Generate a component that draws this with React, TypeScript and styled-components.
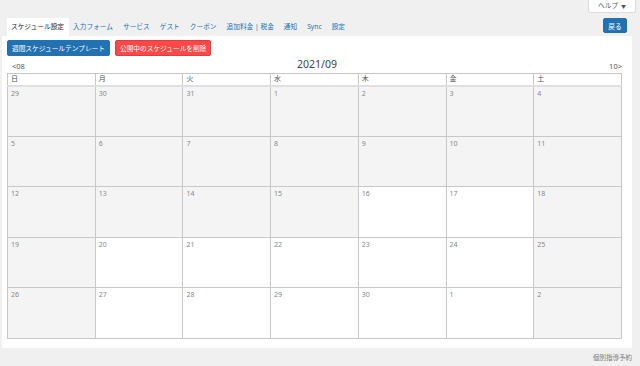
import styled, { createGlobalStyle } from 'styled-components'

const GlobalStyle = createGlobalStyle`
  html, body {
    margin: 0;
    padding: 0;
    background: #f0f0f1;
    font-family: "Noto Sans", "Noto Sans CJK JP", sans-serif;
  }
  * { box-sizing: border-box; }
`

const tabs = ['スケジュール設定', '入力フォーム', 'サービス', 'ゲスト', 'クーポン', '追加料金 | 税金', '通知', 'Sync', '設定']
const weekdays = ['日', '月', '火', '水', '木', '金', '土']

interface Day {
  label: number
  past: boolean
}

// past days are greyed, weekends are greyed too
function buildWeeks(): Day[][] {
  const start = new Date(2021, 7, 29)
  const today = new Date(2021, 8, 16)
  const weeks: Day[][] = []
  for (let w = 0; w < 5; w++) {
    const row: Day[] = []
    for (let d = 0; d < 7; d++) {
      const date = new Date(start.getFullYear(), start.getMonth(), start.getDate() + w * 7 + d)
      const weekend = d === 0 || d === 6
      row.push({ label: date.getDate(), past: weekend || date < today })
    }
    weeks.push(row)
  }
  return weeks
}

function App() {
  const weeks = buildWeeks()

  return (
    <>
      <GlobalStyle />
      <Page>
        <HelpBar>
          <HelpTab>
            ヘルプ <Caret>▼</Caret>
          </HelpTab>
        </HelpBar>
        <TabBar>
          <Tabs>
            {tabs.map((t, i) => (
              <Tab key={t} $active={i === 0}>
                {t}
              </Tab>
            ))}
          </Tabs>
          <BackButton>戻る</BackButton>
        </TabBar>
        <Panel>
          <ActionRow>
            <ActionButton $tone="blue">週間スケジュールテンプレート</ActionButton>
            <ActionButton $tone="red">公開中のスケジュールを削除</ActionButton>
          </ActionRow>
          <MonthNav>
            <NavLink>&lt;08</NavLink>
            <MonthTitle>2021/09</MonthTitle>
            <NavLink>10&gt;</NavLink>
          </MonthNav>
          <Calendar>
            <thead>
              <tr>
                {weekdays.map(w => (
                  <HeadCell key={w}>{w}</HeadCell>
                ))}
              </tr>
            </thead>
            <tbody>
              {weeks.map((row, i) => (
                <tr key={i}>
                  {row.map((day, j) => (
                    <DayCell key={j} $past={day.past}>
                      {day.label}
                    </DayCell>
                  ))}
                </tr>
              ))}
            </tbody>
          </Calendar>
        </Panel>
        <Footer>個別指導予約</Footer>
      </Page>
    </>
  )
}

const Page = styled.div`
  width: 640px;
  height: 366px;
  overflow: hidden;
`

const HelpBar = styled.div`
  display: flex;
  justify-content: flex-end;
  padding-right: 4px;
`

const HelpTab = styled.div`
  width: 48px;
  height: 13px;
  background: #fff;
  border: 1px solid #dcdcde;
  border-top: none;
  border-radius: 0 0 3px 3px;
  color: #50575e;
  font-size: 6.7px;
  line-height: 12px;
  text-align: center;
`

const Caret = styled.span`
  font-size: 5px;
  margin-left: 1px;
`

const TabBar = styled.div`
  display: flex;
  justify-content: space-between;
  align-items: flex-start;
  margin-top: 5px;
  padding: 0 13px 0 7px;
  height: 18px;
`

const Tabs = styled.div`
  display: flex;
  height: 18px;
`

const Tab = styled.div<{ $active?: boolean }>`
  padding: 0 5px 0 4px;
  margin-right: ${p => (p.$active ? '0' : '1px')};
  line-height: 18px;
  font-size: 6.7px;
  white-space: nowrap;
  color: ${p => (p.$active ? '#1d2327' : '#2271b1')};
  background: ${p => (p.$active ? '#fff' : 'transparent')};
`

const BackButton = styled.button`
  width: 24px;
  height: 15px;
  padding: 0;
  border: 1px solid #2271b1;
  border-radius: 2px;
  background: #2271b1;
  color: #fff;
  font-family: inherit;
  font-size: 6.7px;
`

const Panel = styled.div`
  margin: 0 8px 0 2px;
  height: 312px;
  background: #fff;
  padding: 4px 10px 0 5px;
`

const ActionRow = styled.div`
  display: flex;
  gap: 5px;
`

const ActionButton = styled.button<{ $tone: 'blue' | 'red' }>`
  height: 16px;
  padding: 0 4px;
  border-radius: 2px;
  font-family: inherit;
  font-size: 6.7px;
  color: #fff;
  background: ${p => (p.$tone === 'blue' ? '#2271b1' : '#ff4848')};
  border: 1px solid ${p => (p.$tone === 'blue' ? '#2271b1' : '#e33c3c')};
  white-space: nowrap;
`

const MonthNav = styled.div`
  display: flex;
  justify-content: space-between;
  align-items: flex-end;
  height: 17px;
  padding: 0 0 2px 5px;
`

const NavLink = styled.span`
  font-size: 7.5px;
  color: #555;
  line-height: 10px;
`

const MonthTitle = styled.span`
  font-size: 10.5px;
  color: #444;
  line-height: 13px;
`

const Calendar = styled.table`
  width: 615px;
  table-layout: fixed;
  border-collapse: collapse;
  border: 1px solid #c8c8c8;
`

const HeadCell = styled.th`
  height: 12px;
  padding: 0 3px;
  border: 1px solid #c8c8c8;
  border-bottom: 2px solid #e0e0e0;
  font-size: 7px;
  font-weight: normal;
  color: #555;
  text-align: left;
  line-height: 10px;
`

const DayCell = styled.td<{ $past: boolean }>`
  height: 50.5px;
  padding: 2px 3px;
  vertical-align: top;
  border: 1px solid #c8c8c8;
  background: ${p => (p.$past ? '#f4f4f4' : '#fff')};
  font-size: 7px;
  color: #888;
  line-height: 9px;
`

const Footer = styled.div`
  text-align: right;
  padding: 4px 8px 0 0;
  font-size: 6.5px;
  color: #777;
`

export default App
